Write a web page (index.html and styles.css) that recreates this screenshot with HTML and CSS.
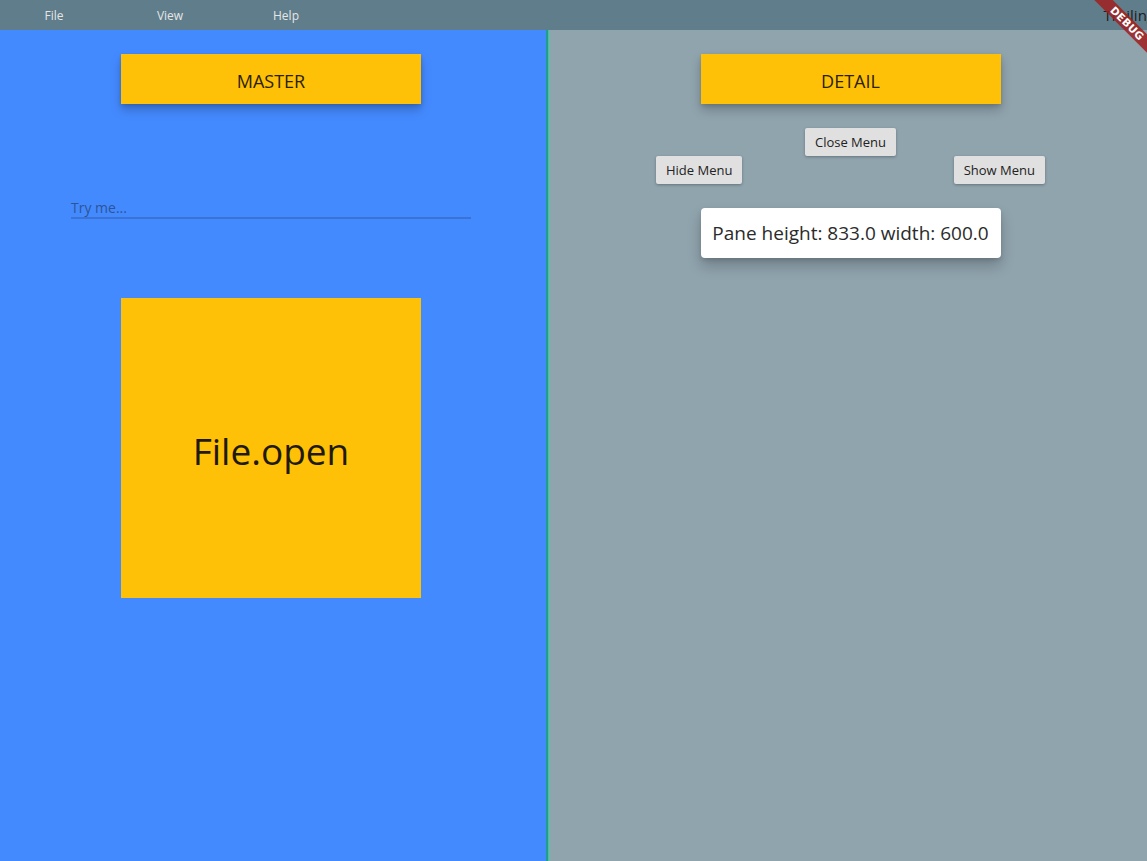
FILE: index.html
```html
<!DOCTYPE html>
<html>
<head>
<meta charset="utf-8">
<link rel="stylesheet" href="styles.css">
</head>
<body>
<div class="app">
  <header class="menubar">
    <div class="menu-item">File</div>
    <div class="menu-item">View</div>
    <div class="menu-item">Help</div>
    <div class="trailing">Trailing</div>
  </header>
  <div class="panes">
    <section class="pane master-pane">
      <div class="title-btn">MASTER</div>
      <div class="field"><span class="placeholder">Try me...</span></div>
      <div class="file-box">File.open</div>
    </section>
    <div class="divider"></div>
    <section class="pane detail-pane">
      <div class="title-btn">DETAIL</div>
      <button class="small-btn close-btn">Close Menu</button>
      <div class="btn-row">
        <button class="small-btn">Hide Menu</button>
        <button class="small-btn">Show Menu</button>
      </div>
      <div class="info-card">Pane height: 833.0 width: 600.0</div>
    </section>
  </div>
  <div class="debug-banner">DEBUG</div>
</div>
</body>
</html>
```
FILE: styles.css
```css
* { box-sizing: border-box; }
html, body { margin: 0; padding: 0; }
body {
  width: 1147px;
  height: 861px;
  overflow: hidden;
  font-family: "Open Sans", "Noto Sans", sans-serif;
}
.app {
  position: relative;
  width: 1147px;
  height: 861px;
  display: flex;
  flex-direction: column;
  overflow: hidden;
}
.menubar {
  height: 30px;
  background: #607d8b;
  display: flex;
  align-items: center;
}
.menu-item {
  width: 116px;
  text-align: center;
  font-size: 12px;
  color: #e6e6e6;
}
.menu-item:first-child { margin-left: -4px; }
.trailing {
  margin-left: auto;
  margin-right: -8px;
  font-size: 15px;
  color: #1e1e1e;
  white-space: nowrap;
}
.panes {
  flex: 1;
  display: flex;
}
.pane {
  display: flex;
  flex-direction: column;
  align-items: center;
}
.master-pane {
  width: 546px;
  background: #448aff;
  padding-right: 4px;
  padding-top: 24px;
}
.divider {
  width: 4px;
  background: linear-gradient(to right, #1f9e8e 0, #1f9e8e 2px, #4fb6a4 2px, #6fbfae 4px);
}
.detail-pane {
  flex: 1;
  background: #90a4ae;
  padding-left: 4px;
  padding-top: 24px;
}
.title-btn {
  width: 300px;
  height: 50px;
  background: #ffc107;
  display: flex;
  align-items: center;
  justify-content: center;
  font-size: 18px;
  color: #2a2208;
  padding-top: 3px;
  box-shadow: 0 6px 10px rgba(0,0,0,0.22), 0 2px 4px rgba(0,0,0,0.12);
}
.field {
  margin-top: 93px;
  width: 400px;
  height: 22px;
  border-bottom: 2px solid #3a72d6;
  display: flex;
  align-items: flex-end;
  padding-bottom: 1px;
}
.placeholder {
  font-size: 14px;
  color: #2c5597;
  line-height: 16px;
}
.file-box {
  margin-top: 79px;
  width: 300px;
  height: 300px;
  background: #ffc107;
  display: flex;
  align-items: center;
  justify-content: center;
  font-size: 37px;
  color: #1f1a08;
  padding-top: 4px;
}
.small-btn {
  height: 28px;
  border: none;
  border-radius: 2px;
  background: #e0e0e0;
  font-family: "Open Sans", "Noto Sans", sans-serif;
  font-size: 13px;
  color: #222;
  padding: 0 10px;
  box-shadow: 0 1px 3px rgba(0,0,0,0.3);
}
.close-btn {
  margin-top: 24px;
}
.btn-row {
  width: 389px;
  display: flex;
  justify-content: space-between;
}
.info-card {
  margin-top: 24px;
  width: 300px;
  height: 50px;
  background: #fff;
  border-radius: 4px;
  display: flex;
  align-items: center;
  justify-content: center;
  font-size: 19px;
  color: #2b2b2b;
  box-shadow: 0 8px 14px rgba(0,0,0,0.22), 0 2px 4px rgba(0,0,0,0.12);
}
.debug-banner {
  position: absolute;
  top: 17px;
  right: -40px;
  width: 120px;
  height: 13px;
  background: rgba(160, 30, 30, 0.85);
  color: #fff;
  font-family: "DejaVu Sans", sans-serif;
  font-weight: bold;
  font-size: 10.5px;
  line-height: 13px;
  text-align: center;
  letter-spacing: 0.3px;
  transform: rotate(45deg);
  transform-origin: center;
}
```
